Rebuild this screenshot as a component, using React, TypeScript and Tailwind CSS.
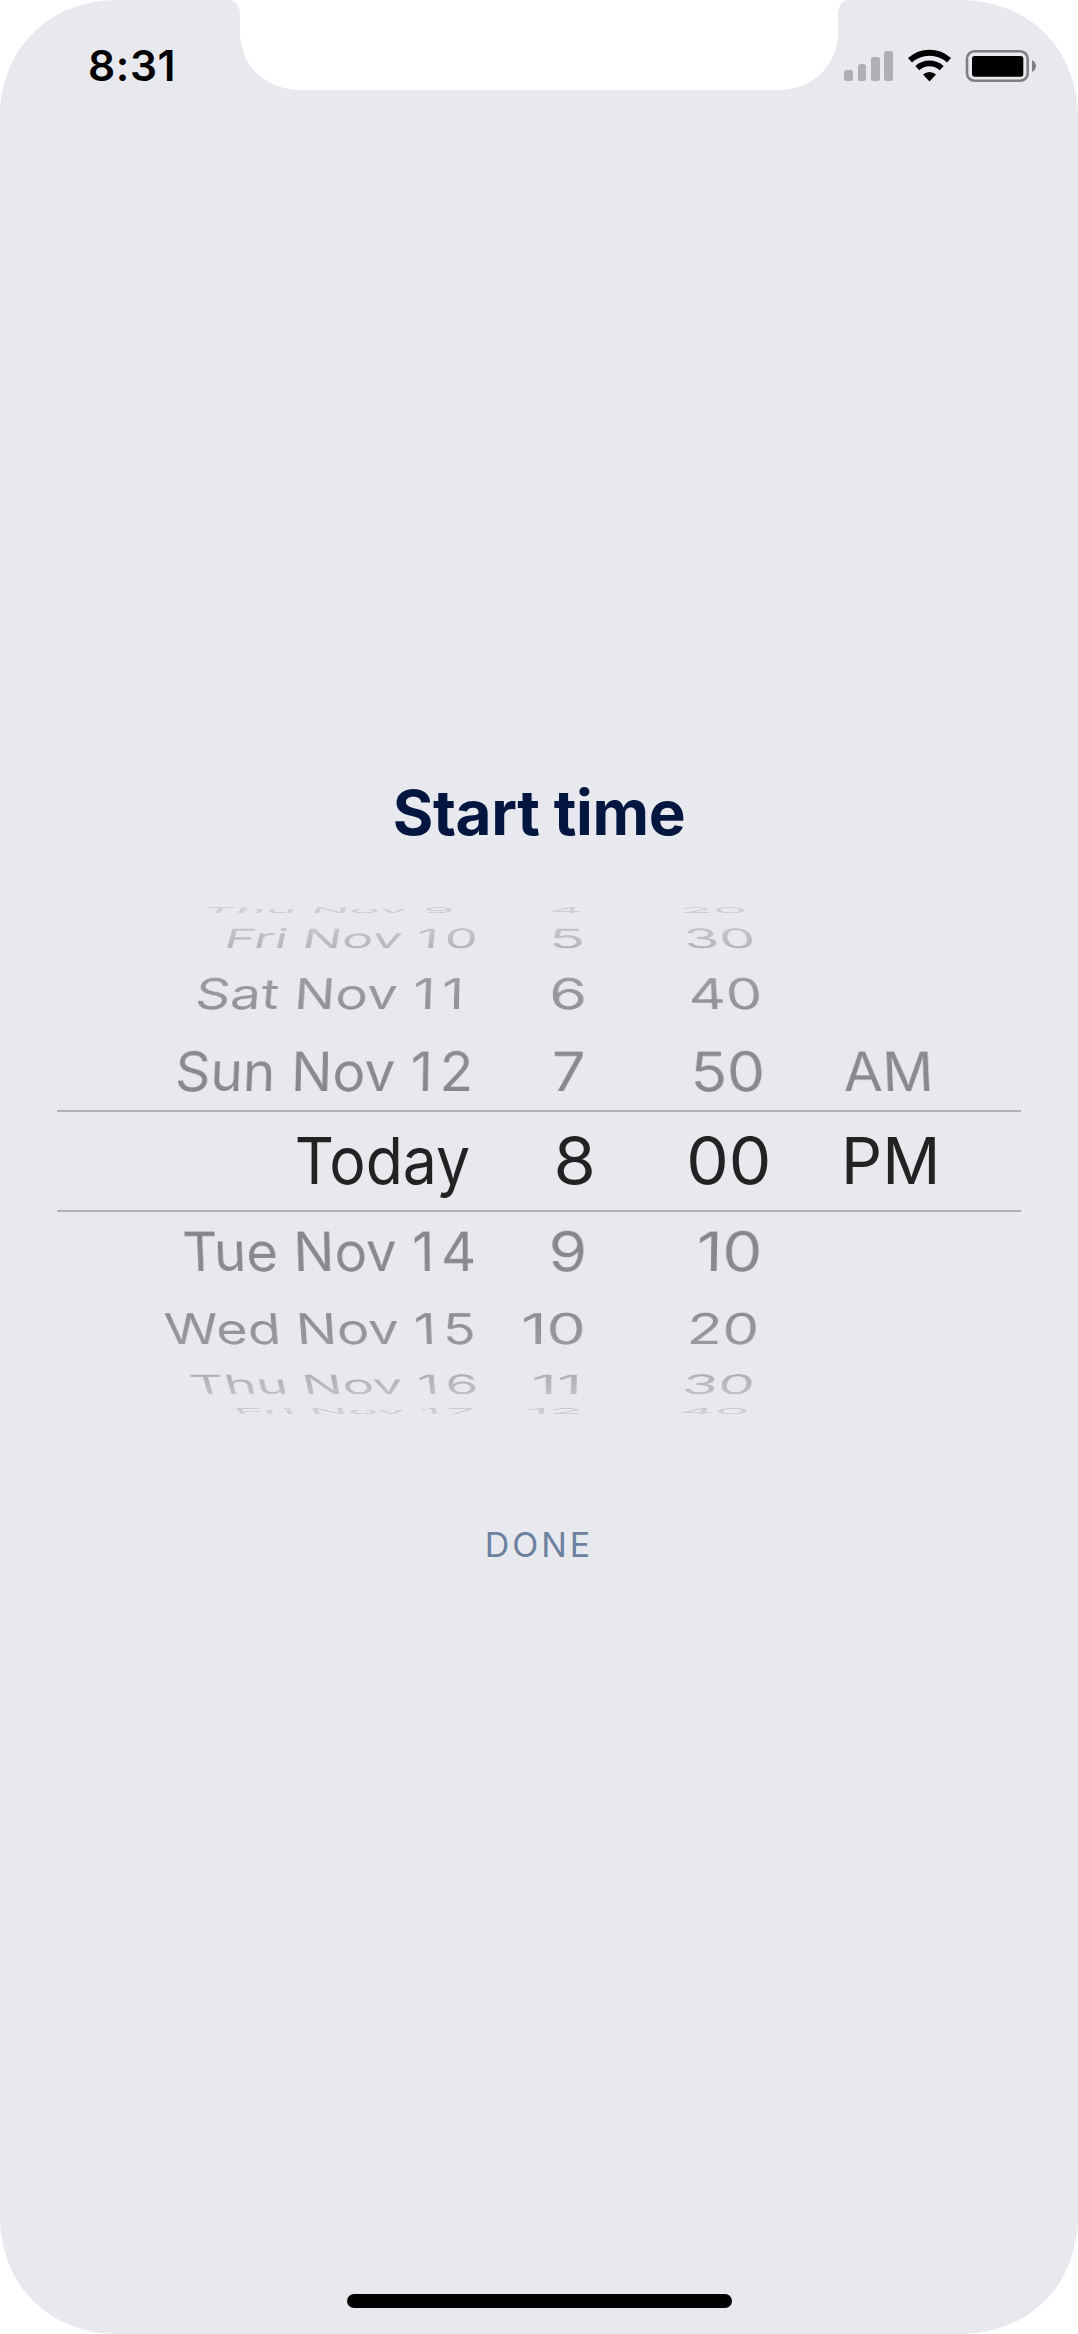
import { useLayoutEffect, useState } from "react";

type Cell = { text: string; left: number; right: number };
type Row = { base: number; cap: number; taper: number; tone: string };

// Baselines and cap heights of the wheel rows, in page pixels.
const PICKER_TOP = 900;
const ROWS: Row[] = [
  { base: 913, cap: 5.7, taper: 0.987, tone: "from-[#d3d3d7] to-[#cacace]" },
  { base: 947.8, cap: 19.4, taper: 0.983, tone: "from-[#c8c8cc] to-[#aeaeb2]" },
  { base: 1008.7, cap: 30.7, taper: 0.99, tone: "from-[#9f9fa3] to-[#8d8d8f]" },
  { base: 1090.7, cap: 39.4, taper: 0.9955, tone: "from-[#8d8d90] to-[#868689]" },
  { base: 1184, cap: 47.4, taper: 1, tone: "from-[#222222] to-[#222222]" },
  { base: 1271, cap: 39.4, taper: 1.0045, tone: "from-[#868689] to-[#8d8d90]" },
  { base: 1344, cap: 30.7, taper: 1.01, tone: "from-[#8d8d8f] to-[#9f9fa3]" },
  { base: 1393.8, cap: 19.4, taper: 1.017, tone: "from-[#aeaeb2] to-[#c8c8cc]" },
  { base: 1413.7, cap: 5.7, taper: 1.013, tone: "from-[#cacace] to-[#d3d3d7]" },
];

const WHEELS: { x: number; width: string; cells: (Cell | null)[] }[] = [
  {
    x: 57,
    width: "w-[443px]",
    cells: [
      { text: "Thu Nov 9", left: 203, right: 450.7 },
      { text: "Fri Nov 10", left: 226.5, right: 474.5 },
      { text: "Sat Nov 11", left: 196.5, right: 459.7 },
      { text: "Sun Nov 12", left: 177, right: 469.5 },
      { text: "Today", left: 297.5, right: 469.2 },
      { text: "Tue Nov 14", left: 184.3, right: 473.1 },
      { text: "Wed Nov 15", left: 164, right: 472.7 },
      { text: "Thu Nov 16", left: 190, right: 474.5 },
      { text: "Fri Nov 17", left: 236, right: 473.3 },
    ],
  },
  {
    x: 500,
    width: "w-[150px]",
    cells: [
      { text: "4", left: 550.3, right: 580.7 },
      { text: "5", left: 553.3, right: 582.7 },
      { text: "6", left: 552, right: 583.7 },
      { text: "7", left: 554.7, right: 583.6 },
      { text: "8", left: 556.5, right: 591.8 },
      { text: "9", left: 551.5, right: 583.5 },
      { text: "10", left: 524, right: 582.7 },
      { text: "11", left: 534.3, right: 578 },
      { text: "12", left: 528.3, right: 580 },
    ],
  },
  {
    x: 650,
    width: "w-[170px]",
    cells: [
      { text: "20", left: 683.7, right: 745.5 },
      { text: "30", left: 688.3, right: 754 },
      { text: "40", left: 691.7, right: 760 },
      { text: "50", left: 695.3, right: 762.3 },
      { text: "00", left: 689.3, right: 767.7 },
      { text: "10", left: 700, right: 759.5 },
      { text: "20", left: 691.3, right: 757 },
      { text: "30", left: 687.3, right: 753.5 },
      { text: "40", left: 682.3, right: 748 },
    ],
  },
  {
    x: 820,
    width: "w-[201px]",
    cells: [
      null,
      null,
      null,
      { text: "AM", left: 844.8, right: 929.5 },
      { text: "PM", left: 846, right: 935 },
      null,
      null,
      null,
      null,
    ],
  },
];

const FONT_SIZE = 66;
const CAP = FONT_SIZE * 0.727;
const BASELINE = FONT_SIZE * (0.5 + (0.96875 - 0.2412) / 2);
const AXIS = 540;
// Two-digit days get extra room after their leading "1".
const DAY_TRACKING = 8;
const DAY = /^(.* )1(\d)$/;

// Projects a flat label onto the wheel, leaning towards the shared axis.
function project(cell: Cell, row: Row, originX: number) {
  const ctx = document.createElement("canvas").getContext("2d")!;
  ctx.font = `400 ${FONT_SIZE}px Inter`;
  const m = ctx.measureText(cell.text);
  const extra = DAY.test(cell.text) ? DAY_TRACKING : 0;
  const ink = m.actualBoundingBoxLeft + m.actualBoundingBoxRight + extra;
  const k = row.taper > 1 ? row.taper : 1;
  const left = (cell.left - AXIS) / k;
  const right = (cell.right - AXIS) / k;
  const sx = (right - left) / ink;
  const sy = row.cap / (CAP * row.taper);
  const g = -(1 / row.taper - 1) / CAP;
  const shift = left / sx + m.actualBoundingBoxLeft;
  return `translate(${AXIS - originX}px, ${FONT_SIZE - BASELINE}px) matrix3d(${sx},0,0,0,0,${sy},0,${g},0,0,1,0,0,0,0,1) translateX(${shift}px)`;
}

function Label({ cell, row, originX }: { cell: Cell; row: Row; originX: number }) {
  const [transform, setTransform] = useState("none");
  useLayoutEffect(() => setTransform(project(cell, row, originX)), [cell, row, originX]);
  const day = cell.text.match(DAY);
  return (
    <span
      className={`-mb-4 block shrink-0 whitespace-nowrap bg-gradient-to-b bg-clip-text pb-4 text-[66px] leading-[66px] text-transparent ${row.tone}`}
      style={{ transform, transformOrigin: `0 ${BASELINE}px` }}
    >
      {day ? (
        <>
          {day[1]}
          <span className="tracking-[8px]">1</span>
          {day[2]}
        </>
      ) : (
        cell.text
      )}
    </span>
  );
}

function Picker() {
  return (
    <div className="relative mx-[57px] flex h-[524px]">
      <div className="absolute inset-x-0 top-[210px] h-[102px] border-y-2 border-[#afafb4]" />
      {WHEELS.map((wheel) => (
        <div key={wheel.x} className={`flex flex-col ${wheel.width}`}>
          {ROWS.map((row, i) => {
            const cell = wheel.cells[i];
            const previous = i === 0 ? PICKER_TOP : ROWS[i - 1].base;
            return (
              <div key={i} className="flex shrink-0 items-end" style={{ height: row.base - previous }}>
                {cell && <Label cell={cell} row={row} originX={wheel.x} />}
              </div>
            );
          })}
        </div>
      ))}
    </div>
  );
}

function StatusIcons() {
  return (
    <svg width="196" height="36" viewBox="0 0 196 36" className="block">
      <g fill="#b0afb4">
        <rect x="4" y="22" width="9" height="11" rx="2.5" />
        <rect x="18" y="16" width="8" height="17" rx="2.5" />
        <rect x="31" y="9" width="9" height="24" rx="2.5" />
        <rect x="44" y="3" width="9" height="30" rx="2.5" />
      </g>
      <g fill="none" stroke="#000">
        <path d="M70 12.3 A29 29 0 0 1 109 12.3" strokeWidth="6" />
        <path d="M77.3 20.2 A18 18 0 0 1 101.7 20.2" strokeWidth="5.8" />
      </g>
      <path d="M83 26.6 A9.4 9.4 0 0 1 96 26.6 L89.5 33.4 Z" />
      <rect x="127" y="3.3" width="60.7" height="29.4" rx="7.5" fill="none" stroke="#7f7f82" strokeWidth="2.6" />
      <rect x="132" y="8" width="51.3" height="20.7" rx="2.6" />
      <path d="M192 12 C197.3 14.5 197.3 21.5 192 24 Z" fill="#7f7f82" />
    </svg>
  );
}

export default function App() {
  return (
    <div className="h-[2334px] w-[1078px] bg-white font-[Inter,sans-serif]">
      <div className="relative flex h-full flex-col bg-[#e8e9ee] [clip-path:path('M0_118C0_49_49_0_118_0H228Q240_0_240_16V32C240_66_266_90_300_90H778C812_90_838_66_838_32V16Q838_0_850_0H960C1029_0_1078_49_1078_118V2216C1078_2285_1029_2334_960_2334H118C49_2334_0_2285_0_2216Z')]">
        <header className="flex h-[132px] justify-between pl-[88px] pr-[42px] pt-[48px]">
          <time className="block text-[42.5px] font-semibold leading-[36px] tracking-[0.6px] text-black">8:31</time>
          <StatusIcons />
        </header>
        <h1 className="mt-[650px] h-[118px] text-center text-[62px] font-bold leading-[62px] tracking-[-0.4px] text-[#031640]">
          Start time
        </h1>
        <Picker />
        <button className="mt-[100px] block self-center text-[34px] leading-[42px] tracking-[3px] text-[#6b819e]">
          DONE
        </button>
        <div className="mb-[26px] mt-auto h-[14px] w-[385px] self-center rounded-full bg-black" />
      </div>
    </div>
  );
}
